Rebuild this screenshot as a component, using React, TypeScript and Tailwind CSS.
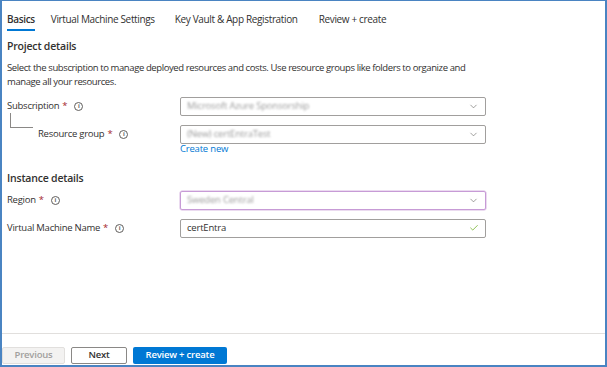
import { ChevronDown, Check } from 'lucide-react';

const FONT = { fontFamily: '"Open Sans", "Noto Sans", sans-serif' };

function Info() {
  return (
    <span className="ml-[7px] inline-flex h-[9px] w-[9px] items-center justify-center rounded-full border border-[#605e5c] text-[6px] font-bold leading-none text-[#605e5c]">
      i
    </span>
  );
}

function Label({ text, indent = false }: { text: string; indent?: boolean }) {
  return (
    <div className={`flex w-[173px] items-center text-[9.5px] tracking-[-0.25px] text-[#323130] ${indent ? 'pl-[31px]' : ''}`}>
      <span>{text}</span>
      <span className="ml-[3px] text-[#a4262c]">*</span>
      <Info />
    </div>
  );
}

function Field({ value, blurred = false, select = true, focus = false, valid = false }: { value: string; blurred?: boolean; select?: boolean; focus?: boolean; valid?: boolean }) {
  return (
    <div
      className={`flex h-[19px] w-[306px] items-center justify-between rounded-[2px] border px-[6px] ${
        focus ? 'border-[#c79bd6] shadow-[0_0_0_0.5px_#d8b8e2]' : 'border-[#a19f9d]'
      }`}
    >
      <span className={`text-[9.5px] tracking-[-0.2px] ${blurred ? 'text-[#9b9b9b] blur-[1.2px]' : 'text-[#323130]'}`}>{value}</span>
      {select && <ChevronDown size={11} strokeWidth={1.3} className="text-[#605e5c]" />}
      {valid && <Check size={10} strokeWidth={1.6} className="text-[#57a300]" />}
    </div>
  );
}

export default function App() {
  return (
    <div style={FONT} className="flex h-[367px] w-[607px] flex-col border-x-2 border-b-2 border-t border-[#4a84c2] bg-white">
      <div className="flex h-[30px] items-end gap-[16px] pl-[5px] text-[10px] leading-[14px] tracking-[-0.35px] text-[#323130]">
        <div className="flex h-full flex-col justify-end">
          <span className="pb-[3px] font-semibold">Basics</span>
          <div className="h-[2px] bg-[#0078d4]" />
        </div>
        <span className="pb-[5px]">Virtual Machine Settings</span>
        <span className="pb-[5px] pl-[4px]">Key Vault &amp; App Registration</span>
        <span className="pb-[5px] pl-[5px]">Review + create</span>
      </div>

      <div className="flex flex-1 flex-col pl-[5px]">
        <div className="mt-[8px] text-[10.5px] font-semibold tracking-[-0.2px] text-[#323130]">Project details</div>
        <p className="mt-[6px] w-[470px] text-[9.5px] leading-[14px] tracking-[-0.4px] text-[#323130]">
          Select the subscription to manage deployed resources and costs. Use resource groups like folders to organize and manage all your resources.
        </p>

        <div className="relative mt-[8px] flex items-center">
          <Label text="Subscription" />
          <Field value="Microsoft Azure Sponsorship" blurred />
        </div>
        <div className="relative mt-[9px] flex items-center">
          <div className="absolute left-[3px] top-[-12px] h-[15px] w-[23px] border-b border-l border-[#8a8886]" />
          <Label text="Resource group" indent />
          <Field value="(New) certEntraTest" blurred />
        </div>
        <div className="ml-[173px] mt-[-1px] text-[9.5px] leading-[11px] tracking-[-0.2px] text-[#0078d4]">Create new</div>

        <div className="mt-[17px] text-[10.5px] font-semibold tracking-[-0.2px] text-[#323130]">Instance details</div>
        <div className="mt-[4px] flex items-center">
          <Label text="Region" />
          <Field value="Sweden Central" blurred focus />
        </div>
        <div className="mt-[9px] flex items-center">
          <Label text="Virtual Machine Name" />
          <Field value="certEntra" select={false} valid />
        </div>
      </div>

      <div className="flex h-[32px] items-start gap-[6px] border-t border-[#e1dfdd] pt-[13px] text-[9.5px] font-semibold tracking-[-0.2px]">
        <button className="h-[17px] w-[63px] rounded-[2px] border border-[#e1dfdd] bg-[#f3f2f1] text-[#a19f9d]">Previous</button>
        <button className="h-[17px] w-[56px] rounded-[2px] border border-[#8a8886] bg-white text-[#323130]">Next</button>
        <button className="h-[17px] w-[94px] rounded-[2px] bg-[#0078d4] text-white">Review + create</button>
      </div>
    </div>
  );
}
